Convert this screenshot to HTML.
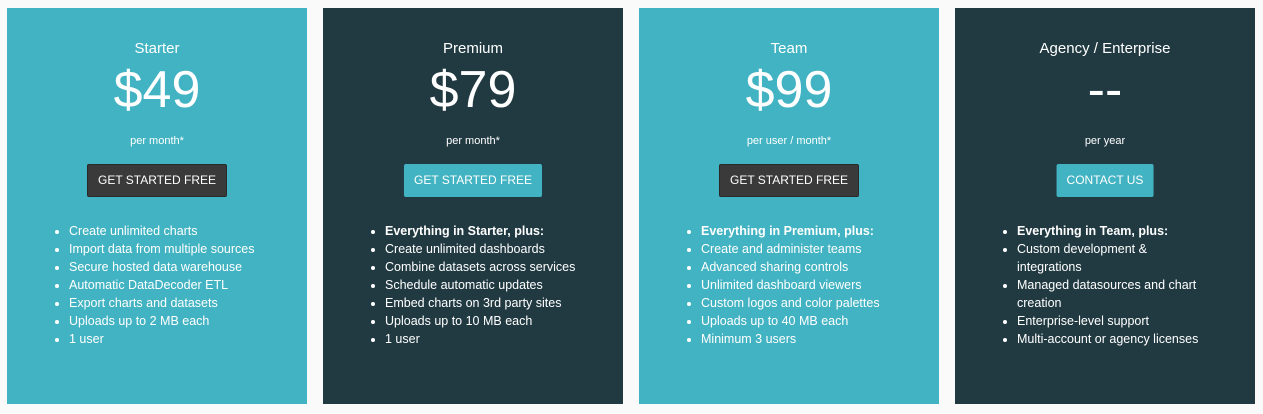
<!DOCTYPE html><html><head><style>
body{margin:0;background:#fafafa;width:1263px;height:414px;overflow:hidden;font-family:"Liberation Sans",sans-serif;color:#fff}
.c{position:absolute;top:8px;width:300px;height:396px;text-align:center}
.t{background:#42b3c2}.d{background:#213a42}
h2{margin:0;position:absolute;top:32px;width:100%;font-size:15px;font-weight:normal}
.p{position:absolute;top:54px;width:100%;font-size:52px;line-height:56px}
.pm{position:absolute;top:127px;width:100%;font-size:11px}
.b{position:absolute;top:156px;left:50%;transform:translateX(-50%);height:33px;line-height:33px;padding:0 10px;font-size:12px;border-radius:2px;white-space:nowrap}
.t .b{background:#3a3a3a;border:1px solid #2a2a2a;height:31px;line-height:31px}
.d .b{background:#42b3c2}
ul{position:absolute;top:214px;left:48px;margin:0;padding:0 0 0 14px;text-align:left;font-size:12.5px;line-height:18px;width:200px}
li{padding-left:0}
</style></head><body>
<div class="c t" style="left:7px"><h2>Starter</h2><div class="p">$49</div><div class="pm">per month*</div><div class="b">GET STARTED FREE</div>
<ul><li>Create unlimited charts</li><li>Import data from multiple sources</li><li>Secure hosted data warehouse</li><li>Automatic DataDecoder ETL</li><li>Export charts and datasets</li><li>Uploads up to 2 MB each</li><li>1 user</li></ul></div>
<div class="c d" style="left:323px"><h2>Premium</h2><div class="p">$79</div><div class="pm">per month*</div><div class="b">GET STARTED FREE</div>
<ul><li><b>Everything in Starter, plus:</b></li><li>Create unlimited dashboards</li><li>Combine datasets across services</li><li>Schedule automatic updates</li><li>Embed charts on 3rd party sites</li><li>Uploads up to 10 MB each</li><li>1 user</li></ul></div>
<div class="c t" style="left:639px"><h2>Team</h2><div class="p">$99</div><div class="pm">per user / month*</div><div class="b">GET STARTED FREE</div>
<ul><li><b>Everything in Premium, plus:</b></li><li>Create and administer teams</li><li>Advanced sharing controls</li><li>Unlimited dashboard viewers</li><li>Custom logos and color palettes</li><li>Uploads up to 40 MB each</li><li>Minimum 3 users</li></ul></div>
<div class="c d" style="left:955px"><h2>Agency / Enterprise</h2><div class="p">--</div><div class="pm">per year</div><div class="b">CONTACT US</div>
<ul style="width:190px"><li><b>Everything in Team, plus:</b></li><li>Custom development &amp; integrations</li><li>Managed datasources and chart creation</li><li>Enterprise-level support</li><li>Multi-account or agency licenses</li></ul></div>
</body></html>
